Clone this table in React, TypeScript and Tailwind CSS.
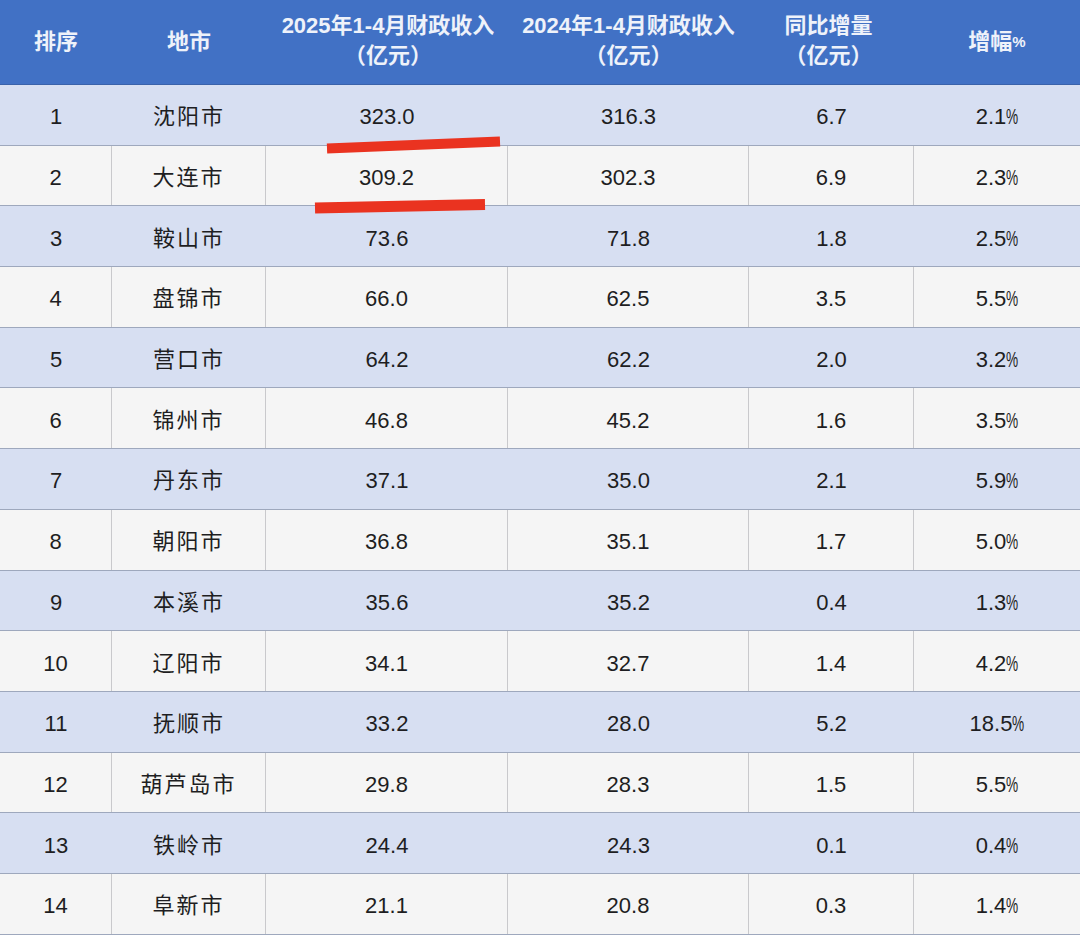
import React from "react";

const rows: [string, string, string, string, string, string][] = [
  ["1", "沈阳市", "323.0", "316.3", "6.7", "2.1"],
  ["2", "大连市", "309.2", "302.3", "6.9", "2.3"],
  ["3", "鞍山市", "73.6", "71.8", "1.8", "2.5"],
  ["4", "盘锦市", "66.0", "62.5", "3.5", "5.5"],
  ["5", "营口市", "64.2", "62.2", "2.0", "3.2"],
  ["6", "锦州市", "46.8", "45.2", "1.6", "3.5"],
  ["7", "丹东市", "37.1", "35.0", "2.1", "5.9"],
  ["8", "朝阳市", "36.8", "35.1", "1.7", "5.0"],
  ["9", "本溪市", "35.6", "35.2", "0.4", "1.3"],
  ["10", "辽阳市", "34.1", "32.7", "1.4", "4.2"],
  ["11", "抚顺市", "33.2", "28.0", "5.2", "18.5"],
  ["12", "葫芦岛市", "29.8", "28.3", "1.5", "5.5"],
  ["13", "铁岭市", "24.4", "24.3", "0.1", "0.4"],
  ["14", "阜新市", "21.1", "20.8", "0.3", "1.4"],
];

const font = { fontFamily: '"Liberation Sans", "Noto Sans CJK SC", sans-serif' };

export default function App() {
  return (
    <div
      className="relative w-[1080px] h-[935px] overflow-hidden bg-[#f5f5f5] text-[#1e1e22]"
      style={font}
    >
      <div className="grid grid-cols-[112px_154px_242px_241px_165px_166px] h-[85px] bg-[#4171c5] text-[#eef2fa] font-bold text-[22px] leading-[30px] border-b border-[#3a62aa]">
        <div className="flex items-center justify-center">排序</div>
        <div className="flex items-center justify-center">地市</div>
        <div className="flex flex-col items-center justify-center whitespace-nowrap -mt-[3px] ml-[2px]">
          <span>2025年1-4月财政收入</span>
          <span>（亿元）</span>
        </div>
        <div className="flex flex-col items-center justify-center whitespace-nowrap -mt-[3px]">
          <span>2024年1-4月财政收入</span>
          <span>（亿元）</span>
        </div>
        <div className="flex flex-col items-center justify-center whitespace-nowrap -mt-[3px] -ml-[6px]">
          <span>同比增量</span>
          <span>（亿元）</span>
        </div>
        <div className="flex items-center justify-center">
          <span>增幅</span>
          <span className="text-[15px]">%</span>
        </div>
      </div>
      <div className="flex flex-col">
        {rows.map((r, i) => {
          const odd = i % 2 === 0;
          const vline = odd ? "" : "border-r border-[#c9c9cc]";
          return (
            <div
              key={r[0]}
              className={`grid grid-cols-[112px_154px_242px_241px_165px_166px] h-[60.7px] text-[22px] border-b border-[#9ea8bd] ${
                odd ? "bg-[#d7dff2]" : "bg-[#f5f5f5]"
              }`}
            >
              <div className={`flex items-center justify-center pt-[4px] ${vline}`}>{r[0]}</div>
              <div className={`flex items-center justify-center pt-[4px] tracking-[2px] ${vline}`}>{r[1]}</div>
              <div className={`flex items-center justify-center pt-[4px] ${vline}`}>{r[2]}</div>
              <div className={`flex items-center justify-center pt-[4px] ${vline}`}>{r[3]}</div>
              <div className={`flex items-center justify-center pt-[4px] ${vline}`}>{r[4]}</div>
              <div className="flex items-center justify-center pt-[4px]">
                <span>{r[5]}</span>
                <span className="inline-block w-[12px] overflow-visible whitespace-nowrap">
                  <span className="inline-block scale-x-[0.62] origin-left">%</span>
                </span>
              </div>
            </div>
          );
        })}
      </div>
      <svg className="absolute left-0 top-0 pointer-events-none" width="1080" height="935">
        <line x1="327" y1="148.5" x2="500" y2="141.5" stroke="#ea3320" strokeWidth="10" />
        <line x1="315" y1="208" x2="485" y2="204.5" stroke="#ea3320" strokeWidth="11" />
      </svg>
    </div>
  );
}
